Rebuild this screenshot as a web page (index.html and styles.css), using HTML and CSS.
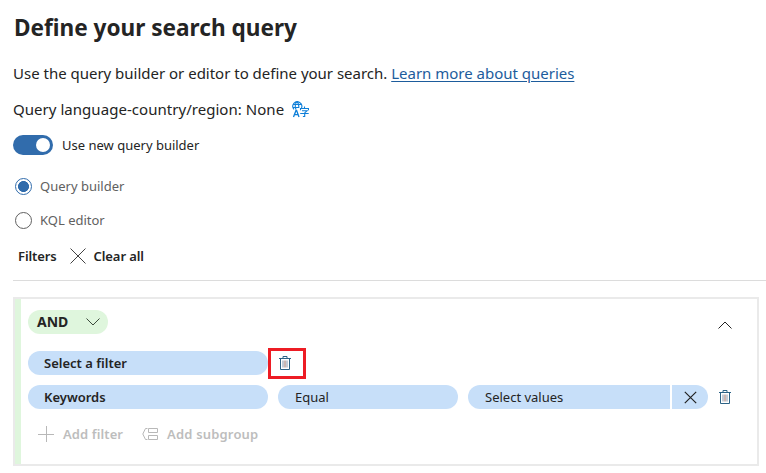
FILE: index.html
```html
<!DOCTYPE html>
<html lang="en">
<head>
<meta charset="utf-8">
<title>Define your search query</title>
<link rel="stylesheet" href="styles.css">
</head>
<body>
<svg width="0" height="0" class="defs" aria-hidden="true">
  <symbol id="trash" viewBox="0 0 12 14">
    <path d="M0 2.500h12M4 2.500v-2h4v2M1.500 2.500v11h9v-11" fill="none" stroke="#2d6386"/>
    <path d="M4 4.500v7M8 4.500v7" fill="none" stroke="#7c8ba0" stroke-width=".9"/>
    <path d="M6 4.500v7" fill="none" stroke="#8a5f55" stroke-width=".9"/>
  </symbol>
</svg>
<main class="page">
  <h1 class="title">Define your search query</h1>
  <p class="intro">Use the query builder or editor to define your search. <a class="link" href="#">Learn more about queries</a></p>
  <p class="language">Query language-country/region: None
    <svg class="language-icon" width="17" height="17" viewBox="0 0 17 17" fill="none" stroke="#0f7fd8">
      <path d="M9.500 7A4.500 4.500 0 1 0 2 8.300M.7 3.500h8.700M.7 6.500H7M4 8.500C3 6 3.200 2.500 5 .7 6.800 2.500 7 4.500 6.800 7" stroke-width="1.1"/>
      <path d="M1.500 16 4 9.500h.6L7 16M2.300 13.600h4" stroke-width="1.300"/>
      <path d="M12.500 5.500v1.700M8.500 9.300V7.500h8v1.800M10 9.800h5l-2.300 2M8.200 12.500h8.500M12.700 11.800v3.700h-1.800" stroke-width="1.100"/>
    </svg>
  </p>
  <div class="toggle-row"><span class="toggle"><span class="knob"></span></span>Use new query builder</div>
  <div class="radio-row"><span class="radio checked"></span>Query builder</div>
  <div class="radio-row second"><span class="radio"></span>KQL editor</div>
  <div class="toolbar">
    <span>Filters</span>
    <svg width="16" height="16" viewBox="0 0 16 16" fill="none" stroke="#424242"><path d="M.5.5l15 15M15.500.5l-15 15"/></svg>
    <span>Clear all</span>
  </div>
  <section class="panel">
    <div class="panel-head">
      <div class="operator">AND
        <svg width="14" height="8" viewBox="0 0 14 8" fill="none" stroke="#3c4a3c"><path d="M.5.5 7 7 13.500.5"/></svg>
      </div>
      <svg class="collapse" width="14" height="8" viewBox="0 0 14 8" fill="none" stroke="#222"><path d="M.5 7.500 7 1l6.500 6.500"/></svg>
    </div>
    <div class="filter-row">
      <div class="pill name">Select a filter</div>
      <div class="highlight"><svg width="12" height="14"><use href="#trash"/></svg></div>
    </div>
    <div class="filter-row last">
      <div class="pill name">Keywords</div>
      <div class="pill condition">Equal</div>
      <div class="value">
        <div class="pill select">Select values</div>
        <div class="remove"><svg width="13" height="13" viewBox="0 0 13 13" fill="none" stroke="#222" stroke-width="1.200"><path d="M.8.8l11.400 11.400M12.200.8.8 12.200"/></svg></div>
      </div>
      <svg class="delete" width="12" height="14"><use href="#trash"/></svg>
    </div>
    <div class="actions">
      <svg width="16" height="16" viewBox="0 0 16 16" fill="none" stroke="#b8b8b8"><path d="M0 8.500h16M8.500 0v16"/></svg>
      <span class="add-filter">Add filter</span>
      <svg width="17" height="12" viewBox="0 0 17 12" fill="none" stroke="#b8b8b8"><path d="M5.500.5H3.500L.8 6l2.700 5.500h2M6.500.5h9v4h-9zM6.500 7.500h9v4h-9z"/></svg>
      <span class="add-group">Add subgroup</span>
    </div>
  </section>
</main>
</body>
</html>
```
FILE: styles.css
```css
* { box-sizing: border-box; }
body { margin: 0; background: #fff; color: #242424; font: 13px/20px "Noto Sans", "Open Sans", sans-serif; }
.defs { display: block; }
.page { height: 473px; padding: 12px 0 0 13px; overflow: hidden; }
.page svg { display: block; flex: none; }
.title { margin: 0 0 0 1px; font-size: 22.6px; line-height: 32px; font-weight: 700; }
.intro { margin: 17px 0 0; font-size: 15px; line-height: 24px; letter-spacing: -.01px; }
.link { color: #1d5c9c; text-decoration: underline; text-underline-offset: 2px; text-decoration-thickness: 1px; }
.language { display: flex; align-items: center; margin: 12px 0 0; font-size: 15px; line-height: 24px; letter-spacing: .04px; }
.language-icon { margin-left: 8px; }
.toggle-row { display: flex; align-items: center; height: 20px; margin-top: 14px; gap: 9px; }
.toggle { display: flex; align-items: center; justify-content: flex-end; width: 40px; height: 20px; padding: 3px; border-radius: 10px; background: #316cac; }
.knob { width: 14px; height: 14px; border-radius: 50%; background: #fff; }
.radio-row { display: flex; align-items: center; gap: 8px; height: 20px; margin: 21px 0 0 2px; color: #616161; }
.radio-row.second { margin-top: 14px; }
.radio { width: 17px; height: 17px; border: 1px solid #616161; border-radius: 50%; }
.radio.checked { border-color: #316cac; background: radial-gradient(circle, #316cac 5.2px, #fff 5.8px); }
.toolbar { display: flex; align-items: center; height: 51px; padding: 2px 0 0 5px; border-bottom: 1px solid #dcdcdc; font-weight: 600; letter-spacing: -.1px; }
.toolbar svg { margin: 0 8px 0 13px; }
.panel { width: 746px; height: 169px; margin-top: 16px; border: 2px solid #eaeaea; padding: 11px 0 0 7px; box-shadow: inset 6px 0 #dff6dd; }
.panel-head { display: flex; align-items: center; justify-content: space-between; padding: 0 25px 0 6px; }
.operator { display: flex; align-items: center; justify-content: space-between; width: 80px; height: 24px; padding: 0 8px 0 9px; border-radius: 12px; background: #dff6dd; font-size: 14px; font-weight: 700; }
.collapse { margin-top: 5px; }
.filter-row { display: flex; align-items: center; height: 24px; margin: 17px 0 0 6px; }
.filter-row.last { margin-top: 10px; }
.pill { height: 24px; padding-left: 17px; border-radius: 12px; background: #c7dff9; line-height: 24px; }
.name { width: 240px; padding-left: 16px; font-weight: 600; }
.condition { width: 180px; margin: 0 10px; }
.value { display: flex; gap: 2px; }
.select { width: 202px; border-radius: 12px 0 0 12px; }
.remove { display: flex; align-items: center; justify-content: center; width: 36px; height: 24px; border-radius: 0 12px 12px 0; background: #c7dff9; }
.delete { margin-left: 11px; }
.highlight { display: flex; align-items: center; width: 38px; height: 31px; padding-left: 8px; border: 3px solid #ed1c24; }
.actions { display: flex; align-items: center; height: 24px; margin: 13px 0 0 16px; color: #bdbdbd; font-weight: 600; }
.add-filter { margin: 0 19px 0 9px; letter-spacing: .1px; }
.add-group { margin-left: 8px; letter-spacing: .17px; }
```
